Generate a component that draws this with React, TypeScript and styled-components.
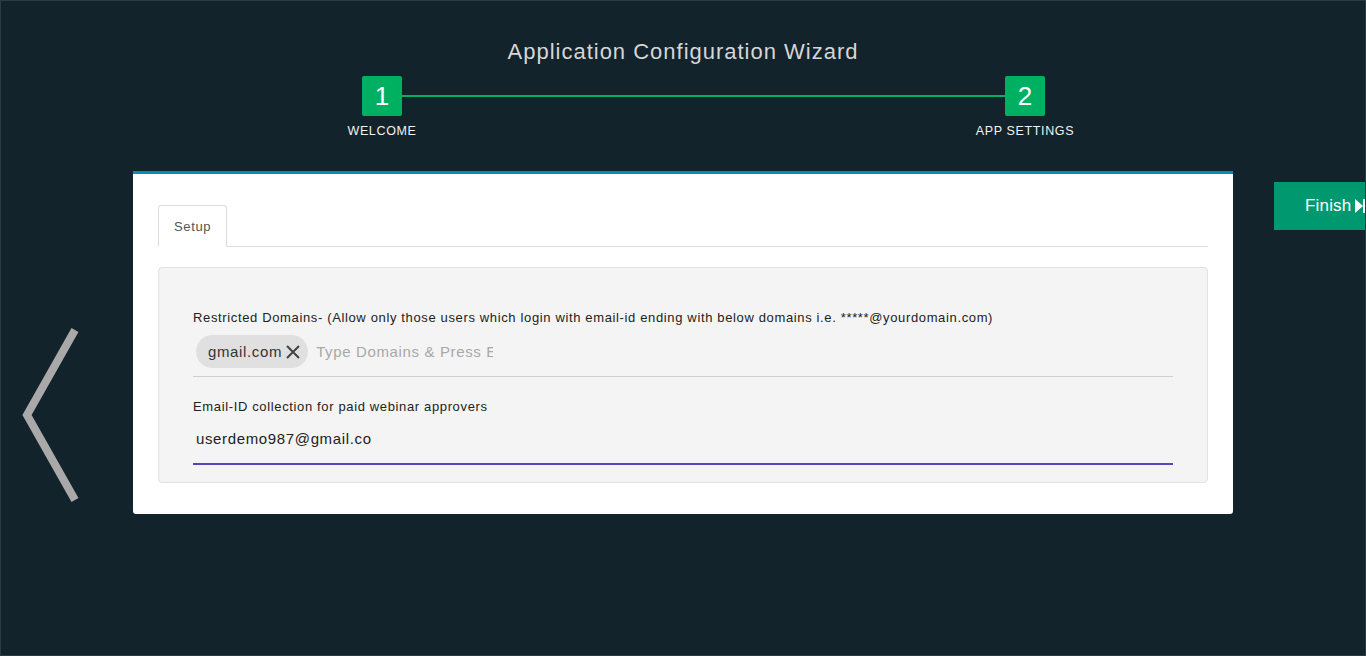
import React from "react";
import styled, { createGlobalStyle } from "styled-components";

const Global = createGlobalStyle`
  html, body { margin: 0; padding: 0; }
  body { background: #12232b; font-family: "Liberation Sans", Arial, sans-serif; letter-spacing: 0.04em; }
  * { box-sizing: border-box; }
`;

const Page = styled.div`
  position: relative;
  width: 1366px;
  height: 656px;
  overflow: hidden;
  background: #12232b;
  border: 1px solid #2b3b44;
  display: flex;
  flex-direction: column;
  align-items: center;
`;

const Title = styled.h1`
  margin: 36px 0 0;
  font-size: 22px;
  line-height: 30px;
  font-weight: normal;
  letter-spacing: 0.045em;
  color: #d6d6d6;
`;

const Stepper = styled.div`
  width: 1100px;
  padding-left: 229px;
  margin-top: 9px;
`;

const StepRow = styled.div`
  width: 683px;
  display: flex;
  align-items: center;
`;

const StepBox = styled.div`
  width: 40px;
  height: 40px;
  flex: none;
  border-radius: 2px;
  background: #00b062;
  color: #fff;
  font-size: 26px;
  letter-spacing: 0;
  display: flex;
  align-items: center;
  justify-content: center;
`;

const StepLine = styled.div`
  flex: 1;
  height: 2px;
  background: #00b062;
`;

const LabelRow = styled.div`
  width: 683px;
  display: flex;
  justify-content: space-between;
  margin-top: 8px;
`;

const StepLabel = styled.div<{ $w: number; $shift: number }>`
  width: ${(p) => p.$w}px;
  margin-left: ${(p) => p.$shift}px;
  margin-right: ${(p) => -p.$shift}px;
  text-align: center;
  font-size: 12.5px;
  color: #f2f2f2;
  line-height: 14px;
  white-space: nowrap;
`;

const Card = styled.div`
  margin-top: 33px;
  width: 1100px;
  background: #fff;
  border-top: 3px solid #0a87bd;
  border-radius: 0 0 3px 3px;
  padding: 31px 25px 31px 25px;
`;

const Tabs = styled.div`
  display: flex;
  border-bottom: 1px solid #dcdcdc;
`;

const Tab = styled.div`
  height: 42px;
  padding: 0 15px;
  margin-bottom: -1px;
  border: 1px solid #dcdcdc;
  border-bottom: 1px solid #fff;
  border-radius: 3px 3px 0 0;
  background: #fff;
  font-size: 13px;
  color: #555;
  display: flex;
  align-items: center;
`;

const Panel = styled.div`
  margin-top: 20px;
  background: #f4f4f4;
  border: 1px solid #e2e2e2;
  border-radius: 4px;
  padding: 42px 34px 17px;
`;

const FieldLabel = styled.div`
  font-size: 13px;
  color: #222;
  line-height: 16px;
`;

const TagField = styled.div`
  margin-top: 9px;
  display: flex;
  align-items: center;
  gap: 8px;
  padding: 0 0 8px 3px;
  border-bottom: 1px solid #cfcfcf;
`;

const Chip = styled.div`
  height: 33px;
  border-radius: 17px;
  background: #e0e0e0;
  padding: 0 6px 0 12px;
  display: flex;
  align-items: center;
  gap: 2px;
  font-size: 15px;
  color: #333;
`;

const TagInput = styled.input`
  border: none;
  background: transparent;
  outline: none;
  font-family: inherit;
  letter-spacing: inherit;
  font-size: 15px;
  color: #333;
  width: 177px;
  padding: 0;
  &::placeholder { color: #a8a8a8; }
`;

const Second = styled.div`
  margin-top: 22px;
`;

const TextInput = styled.input`
  display: block;
  width: 100%;
  margin-top: 8px;
  height: 42px;
  padding: 0 3px 9px;
  border: none;
  border-bottom: 2px solid #5546b5;
  background: transparent;
  outline: none;
  font-family: inherit;
  letter-spacing: inherit;
  font-size: 15px;
  color: #222;
`;

const FinishButton = styled.button`
  position: absolute;
  top: 181px;
  left: 1273px;
  width: 120px;
  height: 48px;
  border: none;
  border-radius: 0;
  background: #00996f;
  color: #fff;
  font-family: inherit;
  letter-spacing: 0.01em;
  font-size: 17px;
  display: flex;
  align-items: center;
  gap: 4px;
  padding: 0 0 0 31px;
`;

const BackArrow = styled.svg`
  position: absolute;
  left: 16px;
  top: 321px;
`;

export default function App() {
  return (
    <>
      <Global />
      <Page>
        <Title>Application Configuration Wizard</Title>
        <Stepper>
          <StepRow>
            <StepBox>1</StepBox>
            <StepLine />
            <StepBox>2</StepBox>
          </StepRow>
          <LabelRow>
            <StepLabel $w={100} $shift={-30}>WELCOME</StepLabel>
            <StepLabel $w={120} $shift={40}>APP SETTINGS</StepLabel>
          </LabelRow>
        </Stepper>
        <Card>
          <Tabs>
            <Tab>Setup</Tab>
          </Tabs>
          <Panel>
            <FieldLabel>
              Restricted Domains- (Allow only those users which login with email-id ending with below domains i.e. *****@yourdomain.com)
            </FieldLabel>
            <TagField>
              <Chip>
                gmail.com
                <svg width="18" height="18" viewBox="0 0 18 18">
                  <path d="M3 3 L15 15 M15 3 L3 15" stroke="#444" strokeWidth="2" fill="none" />
                </svg>
              </Chip>
              <TagInput placeholder="Type Domains & Press Er" readOnly />
            </TagField>
            <Second>
              <FieldLabel>Email-ID collection for paid webinar approvers</FieldLabel>
              <TextInput defaultValue="userdemo987@gmail.co" readOnly />
            </Second>
          </Panel>
        </Card>
        <FinishButton>
          Finish
          <svg width="16" height="16" viewBox="0 0 16 16">
            <path d="M0 1 L8 8 L0 15 Z" fill="#fff" />
            <rect x="8" y="1" width="3" height="14" fill="#fff" />
          </svg>
        </FinishButton>
        <BackArrow width="70" height="190" viewBox="0 0 70 190">
          <path d="M58 8 L10 93 L58 178" stroke="#a9a9a9" strokeWidth="8" fill="none" strokeLinejoin="miter" />
        </BackArrow>
      </Page>
    </>
  );
}
